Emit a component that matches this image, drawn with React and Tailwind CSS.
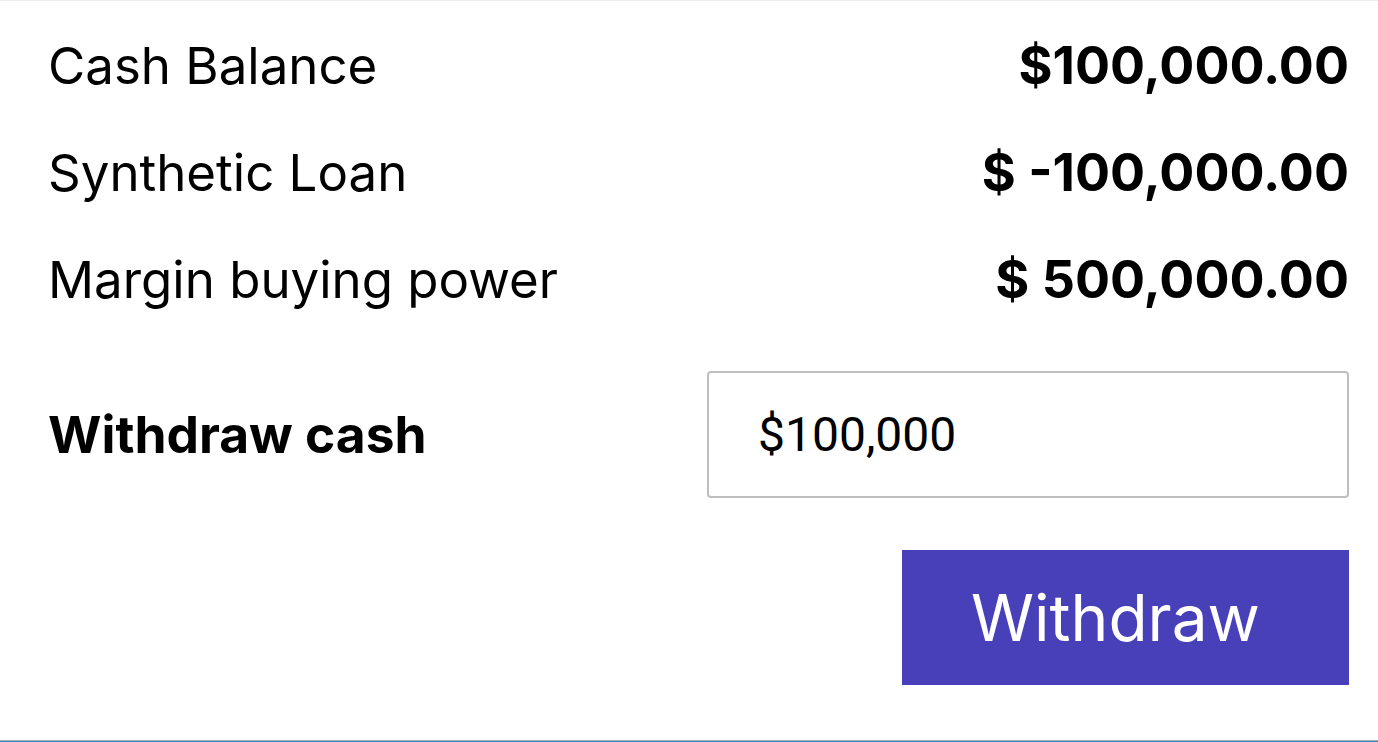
import { useState } from "react"

const ROWS = [
  { label: "Cash Balance", value: "$100,000.00" },
  { label: "Synthetic Loan", value: "$ -100,000.00" },
  { label: "Margin buying power", value: "$ 500,000.00" },
]

export default function App() {
  const [amount, setAmount] = useState("$100,000")

  return (
    <div className="w-[1378px] h-[742px] bg-white border-t border-[#ececec] font-['Inter',sans-serif] text-black flex flex-col">
      <div className="flex-1 pl-[48px] pr-[29px] pt-[11px]">
        {ROWS.map((r) => (
          <div key={r.label} className="flex justify-between items-center leading-[107px]">
            <span className="text-[51px]">{r.label}</span>
            <span className="text-[52px] font-bold">{r.value}</span>
          </div>
        ))}

        <div className="mt-[38px] flex items-center justify-between">
          <span className="text-[51.5px] font-bold">Withdraw cash</span>
          <input
            value={amount}
            onChange={(e) => setAmount(e.target.value)}
            className="w-[642px] h-[127px] border-2 border-[#bfbfbf] rounded-[4px] pl-[49px] text-[48px] font-['Roboto',sans-serif] outline-none"
          />
        </div>

        <div className="mt-[52px] flex justify-end">
          <button className="w-[447px] h-[135px] bg-[#4840b8] text-white text-[64px] pr-[20px]">
            Withdraw
          </button>
        </div>
      </div>
      <div className="h-px bg-[#aaaaaa]" />
      <div className="h-px bg-[#3b8ad0]" />
    </div>
  )
}
